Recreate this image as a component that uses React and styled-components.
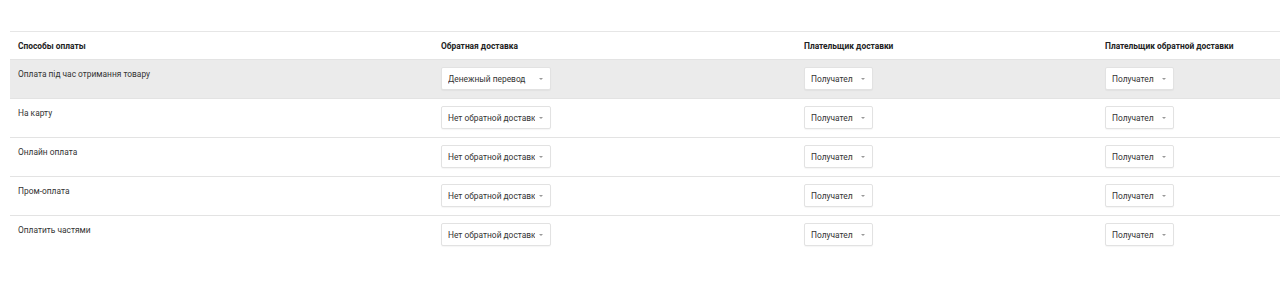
import React from "react";
import styled, { createGlobalStyle } from "styled-components";

const GlobalStyle = createGlobalStyle`
  body {
    margin: 0;
    background: #ffffff;
    font-family: Roboto, "Liberation Sans", Arial, sans-serif;
  }
`;

const Page = styled.div`
  padding: 31px 0 0 10px;
  height: 299px;
  box-sizing: border-box;
  overflow: hidden;
`;

const Table = styled.table`
  width: 1270px;
  border-collapse: collapse;
  table-layout: fixed;
  border-top: 1px solid #e6e6e6;
  font-size: 8.4px;
  color: #333;
`;

const HeadCell = styled.th`
  text-align: left;
  font-weight: 700;
  color: #222;
  height: 28px;
  padding: 0 8px;
  vertical-align: middle;
  box-sizing: border-box;
`;

const Row = styled.tr`
  background: ${(p) => (p.$active ? "#ebebeb" : "#ffffff")};
  border-top: 1px solid #e3e3e3;
`;

const Cell = styled.td`
  padding: 7px 8px 8px;
  vertical-align: top;
  line-height: 12px;
  height: 23px;
`;

const MethodName = styled.div`
  padding-top: 1px;
`;

const SelectBox = styled.div`
  display: flex;
  align-items: center;
  justify-content: space-between;
  width: ${(p) => p.$width}px;
  height: 23px;
  box-sizing: border-box;
  padding: 0 7px 0 6px;
  background: #fff;
  border: 1px solid #e2e2e2;
  border-radius: 2px;
  box-shadow: 0 1px 1px rgba(0, 0, 0, 0.04);
  color: #333;
  font-size: 8.4px;
`;

const SelectText = styled.span`
  overflow: hidden;
  white-space: nowrap;
  width: ${(p) => p.$textWidth}px;
`;

const Caret = styled.span`
  width: 0;
  height: 0;
  border-left: 2.5px solid transparent;
  border-right: 2.5px solid transparent;
  border-top: 2.5px solid #999;
`;

const Select = ({ value, width, textWidth }) => (
  <SelectBox $width={width}>
    <SelectText $textWidth={textWidth}>{value}</SelectText>
    <Caret />
  </SelectBox>
);

const rows = [
  { name: "Оплата під час отримання товару", back: "Денежный перевод" },
  { name: "На карту", back: "Нет обратной доставки" },
  { name: "Онлайн оплата", back: "Нет обратной доставки" },
  { name: "Пром-оплата", back: "Нет обратной доставки" },
  { name: "Оплатить частями", back: "Нет обратной доставки" },
];

export default function App() {
  return (
    <>
      <GlobalStyle />
      <Page>
        <Table>
          <colgroup>
            <col style={{ width: 423 }} />
            <col style={{ width: 363 }} />
            <col style={{ width: 301 }} />
            <col />
          </colgroup>
          <thead>
            <tr>
              <HeadCell>Способы оплаты</HeadCell>
              <HeadCell>Обратная доставка</HeadCell>
              <HeadCell>Плательщик доставки</HeadCell>
              <HeadCell>Плательщик обратной доставки</HeadCell>
            </tr>
          </thead>
          <tbody>
            {rows.map((r, i) => (
              <Row key={r.name} $active={i === 0}>
                <Cell>
                  <MethodName>{r.name}</MethodName>
                </Cell>
                <Cell>
                  <Select value={r.back} width={110} textWidth={87} />
                </Cell>
                <Cell>
                  <Select value="Получатель" width={69} textWidth={42} />
                </Cell>
                <Cell>
                  <Select value="Получатель" width={69} textWidth={42} />
                </Cell>
              </Row>
            ))}
          </tbody>
        </Table>
      </Page>
    </>
  );
}
